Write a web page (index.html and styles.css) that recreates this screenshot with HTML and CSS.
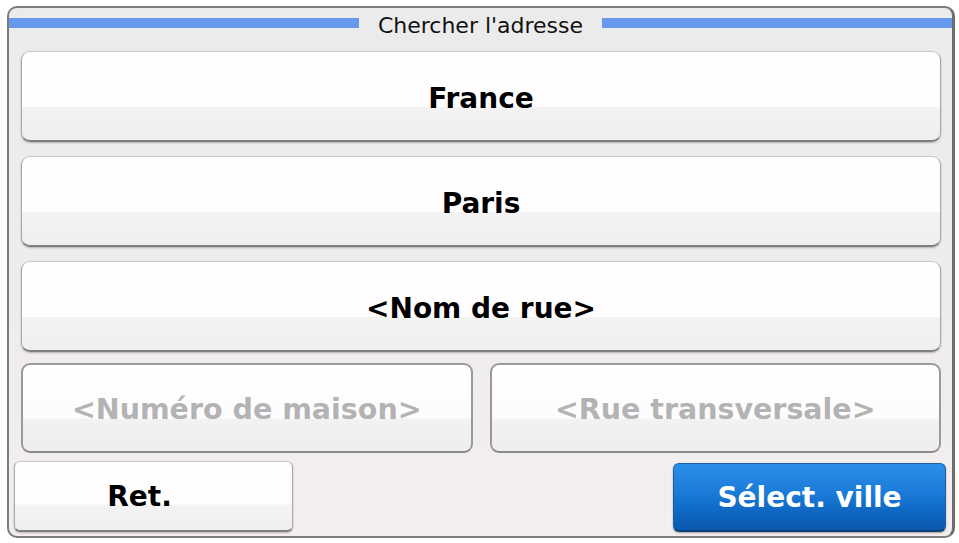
FILE: index.html
```html
<!DOCTYPE html>
<html lang="fr">
<head>
<meta charset="utf-8">
<title>Chercher l'adresse</title>
<link rel="stylesheet" href="styles.css">
</head>
<body>
<div class="frame">
  <div class="header">
    <span class="bar"></span>
    <span class="title">Chercher l'adresse</span>
    <span class="bar"></span>
  </div>
  <div class="rows">
    <div class="btn full">France</div>
    <div class="btn full">Paris</div>
    <div class="btn full">&lt;Nom de rue&gt;</div>
    <div class="pair">
      <div class="btn disabled">&lt;Numéro de maison&gt;</div>
      <div class="btn disabled">&lt;Rue transversale&gt;</div>
    </div>
  </div>
  <div class="footer">
    <div class="btn back">Ret.</div>
    <div class="btn primary">Sélect. ville</div>
  </div>
</div>
</body>
</html>
```
FILE: styles.css
```css
html, body {
  margin: 0;
  padding: 0;
  background: #ffffff;
}
body {
  width: 959px;
  height: 543px;
  overflow: hidden;
  font-family: "DejaVu Sans", Verdana, sans-serif;
}
.frame {
  box-sizing: border-box;
  margin: 6px 0 0 7px;
  width: 948px;
  height: 532px;
  border: 2px solid #7c7c7c;
  border-right: 3px solid #6e6e6e;
  border-radius: 10px;
  background: linear-gradient(#ecebec, #efecef 60%, #f4eeee);
  display: flex;
  flex-direction: column;
}
.header {
  height: 43px;
  display: flex;
  align-items: flex-start;
  padding-top: 10px;
  box-sizing: border-box;
}
.bar {
  flex: 1;
  height: 10px;
  background: #6699ee;
}
.title {
  font-size: 22px;
  line-height: 10px;
  padding: 0 19px;
  color: #111;
  position: relative;
  top: 3px;
}
.rows {
  display: flex;
  flex-direction: column;
  padding: 0 11px 0 12px;
  gap: 14px;
}
.btn {
  box-sizing: border-box;
  display: flex;
  align-items: center;
  justify-content: center;
  font-weight: bold;
  font-size: 28px;
  color: #000;
  border-radius: 9px;
  border: 1px solid #c9c7c9;
  border-bottom: 2px solid #7f7f7f;
  border-left-color: #a9a7a9;
  border-right-color: #a9a7a9;
  background: linear-gradient(#ffffff 0%, #fffdff 62%, #f4f3f4 63%, #f0eff0 100%);
  box-shadow: 0 1px 2px rgba(0,0,0,0.25);
}
.full {
  height: 91px;
  padding-top: 5px;
}
.pair {
  display: flex;
  gap: 17px;
  margin-top: -3px;
}
.disabled {
  flex: 1;
  height: 90px;
  padding-top: 2px;
  font-size: 28.5px;
  color: #b3b3b3;
  border: 2px solid #9a9a9a;
  border-bottom-color: #8a8a8a;
  box-shadow: none;
  background: linear-gradient(#ffffff 0%, #fdfcfd 62%, #f3f2f3 63%, #efeeef 100%);
}
.footer {
  display: flex;
  justify-content: space-between;
  align-items: flex-end;
  padding: 0 6px 4px 5px;
  margin-top: auto;
}
.back {
  width: 279px;
  height: 71px;
  border-radius: 6px;
  padding-right: 28px;
}
.primary {
  width: 273px;
  height: 69px;
  border-radius: 6px;
  color: #fff;
  border: 1px solid #1a5fa8;
  border-bottom: 2px solid #0a3f7a;
  background: linear-gradient(#2b8fe8 0%, #1a7ad8 45%, #0f68c4 70%, #0a58ac 100%);
  box-shadow: 0 1px 2px rgba(0,0,0,0.35);
}
```
